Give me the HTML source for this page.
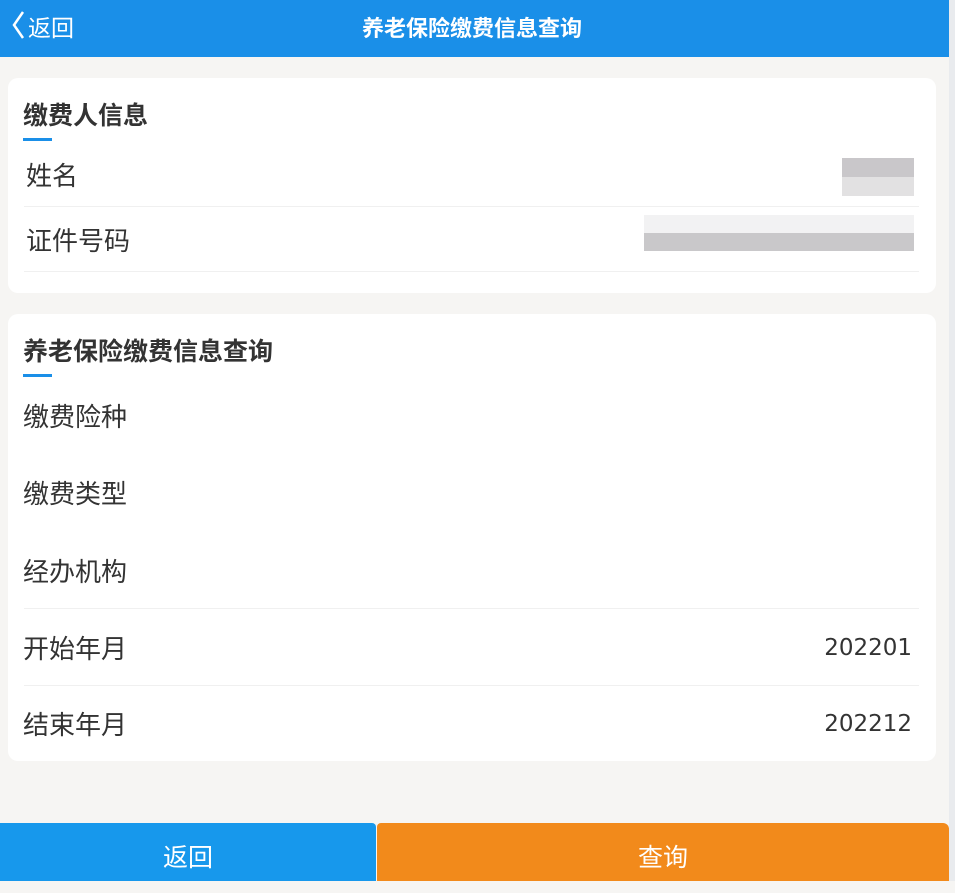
<!DOCTYPE html><html><head><meta charset="utf-8"><style>
*{margin:0;padding:0;box-sizing:border-box}
body{width:955px;height:881px;background:#f6f5f3;font-family:"Liberation Sans","Noto Sans CJK SC",sans-serif;position:relative;overflow:hidden;color:#333}
.hdr{position:absolute;left:0;top:0;width:949px;height:57px;background:#1a8fe8;color:#fff}
.hdr .t{position:absolute;left:0;width:944px;text-align:center;top:11px;font-size:22px;font-weight:bold}
.hdr .b{position:absolute;left:28px;top:9px;font-size:23px}
.strip{position:absolute;left:949px;top:0;width:6px;height:881px;background:#e9ebee}
.card{position:absolute;left:8px;width:928px;background:#fff;border-radius:10px}
.ttl{position:absolute;left:15px;font-size:25px;font-weight:bold;color:#333;line-height:30px}
.ul{position:absolute;left:15px;width:29px;height:3px;background:#1a8fe8}
.r{position:absolute;left:15px;font-size:26px;color:#333;line-height:30px}
.v{position:absolute;right:24px;color:#333;line-height:30px;font-family:"DejaVu Sans","Liberation Sans",sans-serif;font-size:23px}
.ln{position:absolute;left:16px;width:895px;height:1px;background:#f0f0f0}
.btn{position:absolute;top:823px;height:58px;color:#fff;font-size:25px;text-align:center;line-height:70px}
</style></head><body>
<div class="hdr"><svg style="position:absolute;left:10px;top:10px" width="16" height="30"><path d="M13 2 L4 15 L13 28" stroke="#fff" stroke-width="2.5" fill="none"/></svg><span class="b">返回</span><div class="t">养老保险缴费信息查询</div></div>
<div class="strip"></div>
<div class="card" style="top:78px;height:215px">
<div class="ttl" style="top:23px">缴费人信息</div><div class="ul" style="top:60px"></div>
<div class="r" style="top:83px;left:18px">姓名</div>
<div style="position:absolute;left:834px;top:80px;width:72px;height:38px;background:linear-gradient(#c9c7ca 50%,#e2e1e2 50%)"></div>
<div class="ln" style="top:128px"></div>
<div class="r" style="top:148px;left:18px">证件号码</div>
<div style="position:absolute;left:636px;top:137px;width:270px;height:36px;background:linear-gradient(#f2f2f3 50%,#c9c8ca 50%)"></div>
<div class="ln" style="top:193px"></div>
</div>
<div class="card" style="top:314px;height:447px">
<div class="ttl" style="top:23px">养老保险缴费信息查询</div><div class="ul" style="top:60px"></div>
<div class="r" style="top:88px">缴费险种</div>
<div class="r" style="top:165px">缴费类型</div>
<div class="r" style="top:243px">经办机构</div>
<div class="ln" style="top:294px"></div>
<div class="r" style="top:320px">开始年月</div><div class="v" style="top:319px">202201</div>
<div class="ln" style="top:371px"></div>
<div class="r" style="top:396px">结束年月</div><div class="v" style="top:395px">202212</div>
</div>
<div class="btn" style="left:0;width:376px;background:#1798ec;border-top-right-radius:4px">返回</div>
<div class="btn" style="left:377px;width:572px;background:#f28a1b;border-top-left-radius:4px;border-top-right-radius:6px">查询</div>
</body></html>
